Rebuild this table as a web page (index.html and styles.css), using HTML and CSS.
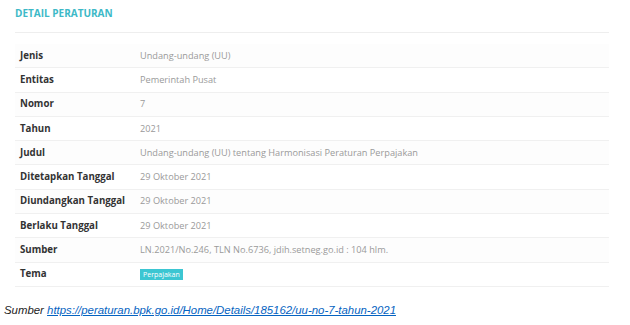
FILE: index.html
```html
<!DOCTYPE html>
<html lang="id">
<head>
<meta charset="utf-8">
<title>Detail Peraturan</title>
<link rel="stylesheet" href="styles.css">
</head>
<body>
<div class="panel">
  <h2 class="panel-title">DETAIL PERATURAN</h2>
  <table class="detail">
    <tbody>
      <tr><th>Jenis</th><td>Undang-undang (UU)</td></tr>
      <tr><th>Entitas</th><td>Pemerintah Pusat</td></tr>
      <tr><th>Nomor</th><td>7</td></tr>
      <tr><th>Tahun</th><td>2021</td></tr>
      <tr><th>Judul</th><td>Undang-undang (UU) tentang Harmonisasi Peraturan Perpajakan</td></tr>
      <tr><th>Ditetapkan Tanggal</th><td>29 Oktober 2021</td></tr>
      <tr><th>Diundangkan Tanggal</th><td>29 Oktober 2021</td></tr>
      <tr><th>Berlaku Tanggal</th><td>29 Oktober 2021</td></tr>
      <tr><th>Sumber</th><td>LN.2021/No.246, TLN No.6736, jdih.setneg.go.id : 104 hlm.</td></tr>
      <tr><th>Tema</th><td><span class="badge">Perpajakan</span></td></tr>
    </tbody>
  </table>
</div>
<p class="caption">Sumber <a href="#">https://peraturan.bpk.go.id/Home/Details/185162/uu-no-7-tahun-2021</a></p>
</body>
</html>
```
FILE: styles.css
```css
html, body {
  margin: 0;
  padding: 0;
  background: #ffffff;
}
.panel {
  width: 594px;
  margin-left: 15px;
  font-family: "Open Sans", "Noto Sans", sans-serif;
}
.panel-title {
  margin: 0;
  padding-top: 6px;
  box-sizing: border-box;
  font-size: 10px;
  font-weight: 700;
  color: #3db9c7;
  line-height: 14px;
  border-bottom: 1px solid #eeeeee;
  height: 33px;
}
.detail {
  margin-top: 11px;
  width: 100%;
  border-collapse: collapse;
}
.detail tr {
  border-bottom: 1px solid #f0f0f0;
}
.detail tr:nth-child(odd) {
  background: #fdfdfd;
}
.detail th,
.detail td {
  height: 23.3px;
  padding: 0 0 0 5px;
  text-align: left;
  vertical-align: middle;
  line-height: 12px;
}
.detail th {
  width: 115px;
  font-size: 9.7px;
  font-weight: 700;
  color: #333333;
}
.detail td {
  font-size: 9.2px;
  color: #9a9a9a;
}
.badge {
  display: inline-block;
  background: #3cc6d2;
  color: #ffffff;
  font-size: 7px;
  line-height: 11px;
  padding: 0 3px;
}
.caption {
  margin: 17px 0 0 4px;
  font-family: "Liberation Sans", Arial, sans-serif;
  font-style: italic;
  font-size: 11.4px;
  color: #222222;
}
.caption a {
  color: #0563c1;
  text-decoration: underline;
}
```
